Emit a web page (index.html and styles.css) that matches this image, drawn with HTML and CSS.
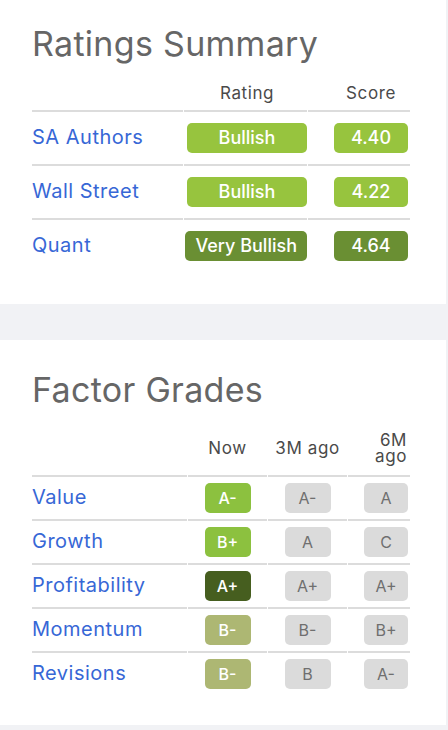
FILE: index.html
```html
<!DOCTYPE html>
<html lang="en">
<head>
<meta charset="utf-8">
<title>Ratings</title>
<link rel="stylesheet" href="styles.css">
</head>
<body>
<div class="page">
  <section class="card card-ratings">
    <h2 class="card-title">Ratings Summary</h2>
    <div class="rs-row rs-head">
      <div class="cell"></div>
      <div class="cell c-rating"><span class="head-box w-rating">Rating</span></div>
      <div class="cell c-score"><span class="head-box w-score">Score</span></div>
    </div>
    <div class="rs-row">
      <div class="cell c-label"><a class="link">SA Authors</a></div>
      <div class="cell c-rating"><span class="badge w-rating bullish">Bullish</span></div>
      <div class="cell c-score"><span class="badge w-score bullish">4.40</span></div>
    </div>
    <div class="rs-row">
      <div class="cell c-label"><a class="link">Wall Street</a></div>
      <div class="cell c-rating"><span class="badge w-rating bullish">Bullish</span></div>
      <div class="cell c-score"><span class="badge w-score bullish">4.22</span></div>
    </div>
    <div class="rs-row last">
      <div class="cell c-label"><a class="link">Quant</a></div>
      <div class="cell c-rating"><span class="badge w-rating very">Very Bullish</span></div>
      <div class="cell c-score"><span class="badge w-score very">4.64</span></div>
    </div>
  </section>

  <section class="card card-factors">
    <h2 class="card-title">Factor Grades</h2>
    <div class="fg-row fg-head">
      <div class="cell"></div>
      <div class="cell c-mid">Now</div>
      <div class="cell c-mid">3M ago</div>
      <div class="cell c-end head-6m">6M ago</div>
    </div>
    <div class="fg-row">
      <div class="cell c-label"><a class="link">Value</a></div>
      <div class="cell c-mid"><span class="grade g-green">A-</span></div>
      <div class="cell c-mid"><span class="grade g-gray">A-</span></div>
      <div class="cell c-end"><span class="grade g-gray narrow">A</span></div>
    </div>
    <div class="fg-row">
      <div class="cell c-label"><a class="link">Growth</a></div>
      <div class="cell c-mid"><span class="grade g-green">B+</span></div>
      <div class="cell c-mid"><span class="grade g-gray">A</span></div>
      <div class="cell c-end"><span class="grade g-gray narrow">C</span></div>
    </div>
    <div class="fg-row">
      <div class="cell c-label"><a class="link">Profitability</a></div>
      <div class="cell c-mid"><span class="grade g-dark">A+</span></div>
      <div class="cell c-mid"><span class="grade g-gray">A+</span></div>
      <div class="cell c-end"><span class="grade g-gray narrow">A+</span></div>
    </div>
    <div class="fg-row">
      <div class="cell c-label"><a class="link">Momentum</a></div>
      <div class="cell c-mid"><span class="grade g-olive">B-</span></div>
      <div class="cell c-mid"><span class="grade g-gray">B-</span></div>
      <div class="cell c-end"><span class="grade g-gray narrow">B+</span></div>
    </div>
    <div class="fg-row last">
      <div class="cell c-label"><a class="link">Revisions</a></div>
      <div class="cell c-mid"><span class="grade g-olive">B-</span></div>
      <div class="cell c-mid"><span class="grade g-gray">B</span></div>
      <div class="cell c-end"><span class="grade g-gray narrow">A-</span></div>
    </div>
  </section>
</div>
</body>
</html>
```

FILE: styles.css
```css
* { box-sizing: border-box; }

html, body {
  margin: 0;
  padding: 0;
  background: #f1f2f5;
  font-family: Inter, "Liberation Sans", sans-serif;
}

.page {
  width: 446px;
  display: flex;
  flex-direction: column;
  gap: 36px;
}

.card {
  background: #ffffff;
  padding-left: 32px;
}

.card-ratings {
  padding-top: 24px;
  padding-bottom: 32px;
}

.card-factors {
  padding-top: 30px;
  padding-bottom: 30px;
}

.card-title {
  margin: 0;
  height: 41px;
  font-size: 34px;
  line-height: 40px;
  font-weight: 400;
  color: #666666;
  letter-spacing: 0.3px;
}

.card-ratings .card-title { margin-bottom: 18px; }
.card-factors .card-title { margin-bottom: 21px; }

/* Ratings summary grid */
.rs-row {
  display: grid;
  grid-template-columns: 151px 123px 102px;
  column-gap: 1px;
  width: 378px;
}

/* Factor grades grid */
.fg-row {
  display: grid;
  grid-template-columns: 155px 79px 79px 62px;
  column-gap: 1px;
  width: 378px;
}

.cell {
  display: flex;
  align-items: center;
  border-bottom: 2px solid #dcdcdc;
}

.last .cell { border-bottom: none; }

.rs-row .cell { height: 54px; }
.rs-row.last .cell { height: 52px; }
.rs-row.rs-head .cell {
  height: auto;
  padding-bottom: 7px;
  align-items: flex-end;
}

.fg-row .cell { height: 44px; }
.fg-row.last .cell { height: 42px; }
.fg-row.fg-head .cell {
  height: auto;
  padding-bottom: 11px;
  align-items: center;
}

.rs-head, .fg-head {
  font-size: 17px;
  color: #4a4a4a;
  letter-spacing: 0.6px;
}

.rs-head { line-height: 20px; }
.fg-head { line-height: 16px; }

.head-box { display: block; text-align: center; }

.c-rating { justify-content: flex-end; }
.c-score { justify-content: flex-end; padding-right: 2px; }
.c-mid { justify-content: center; text-align: center; }
.c-end { justify-content: flex-end; text-align: right; padding-right: 2px; }
.head-6m { padding-right: 3px; }

.c-label { padding-bottom: 3px; }

.link {
  font-size: 20px;
  line-height: 22px;
  letter-spacing: 0.5px;
  color: #3767d6;
  text-decoration: none;
}

.w-rating { min-width: 120px; }
.w-score { width: 74px; }

.badge {
  display: inline-block;
  height: 30px;
  line-height: 30px;
  border-radius: 5px;
  padding: 0 10px;
  text-align: center;
  font-size: 18px;
  font-weight: 500;
  color: #ffffff;
  white-space: nowrap;
}

.bullish { background: #97c43e; }
.very { background: #6a8f33; }

.grade {
  display: inline-block;
  width: 46px;
  height: 30px;
  line-height: 30px;
  border-radius: 5px;
  text-align: center;
  font-size: 16px;
  font-weight: 500;
  color: #ffffff;
}

.grade.narrow { width: 44px; }

.g-green { background: #8cc13f; }
.g-dark { background: #465e1f; }
.g-olive { background: #adb773; }
.g-gray { background: #dbdbdb; color: #6f6f6f; font-weight: 400; }
```
